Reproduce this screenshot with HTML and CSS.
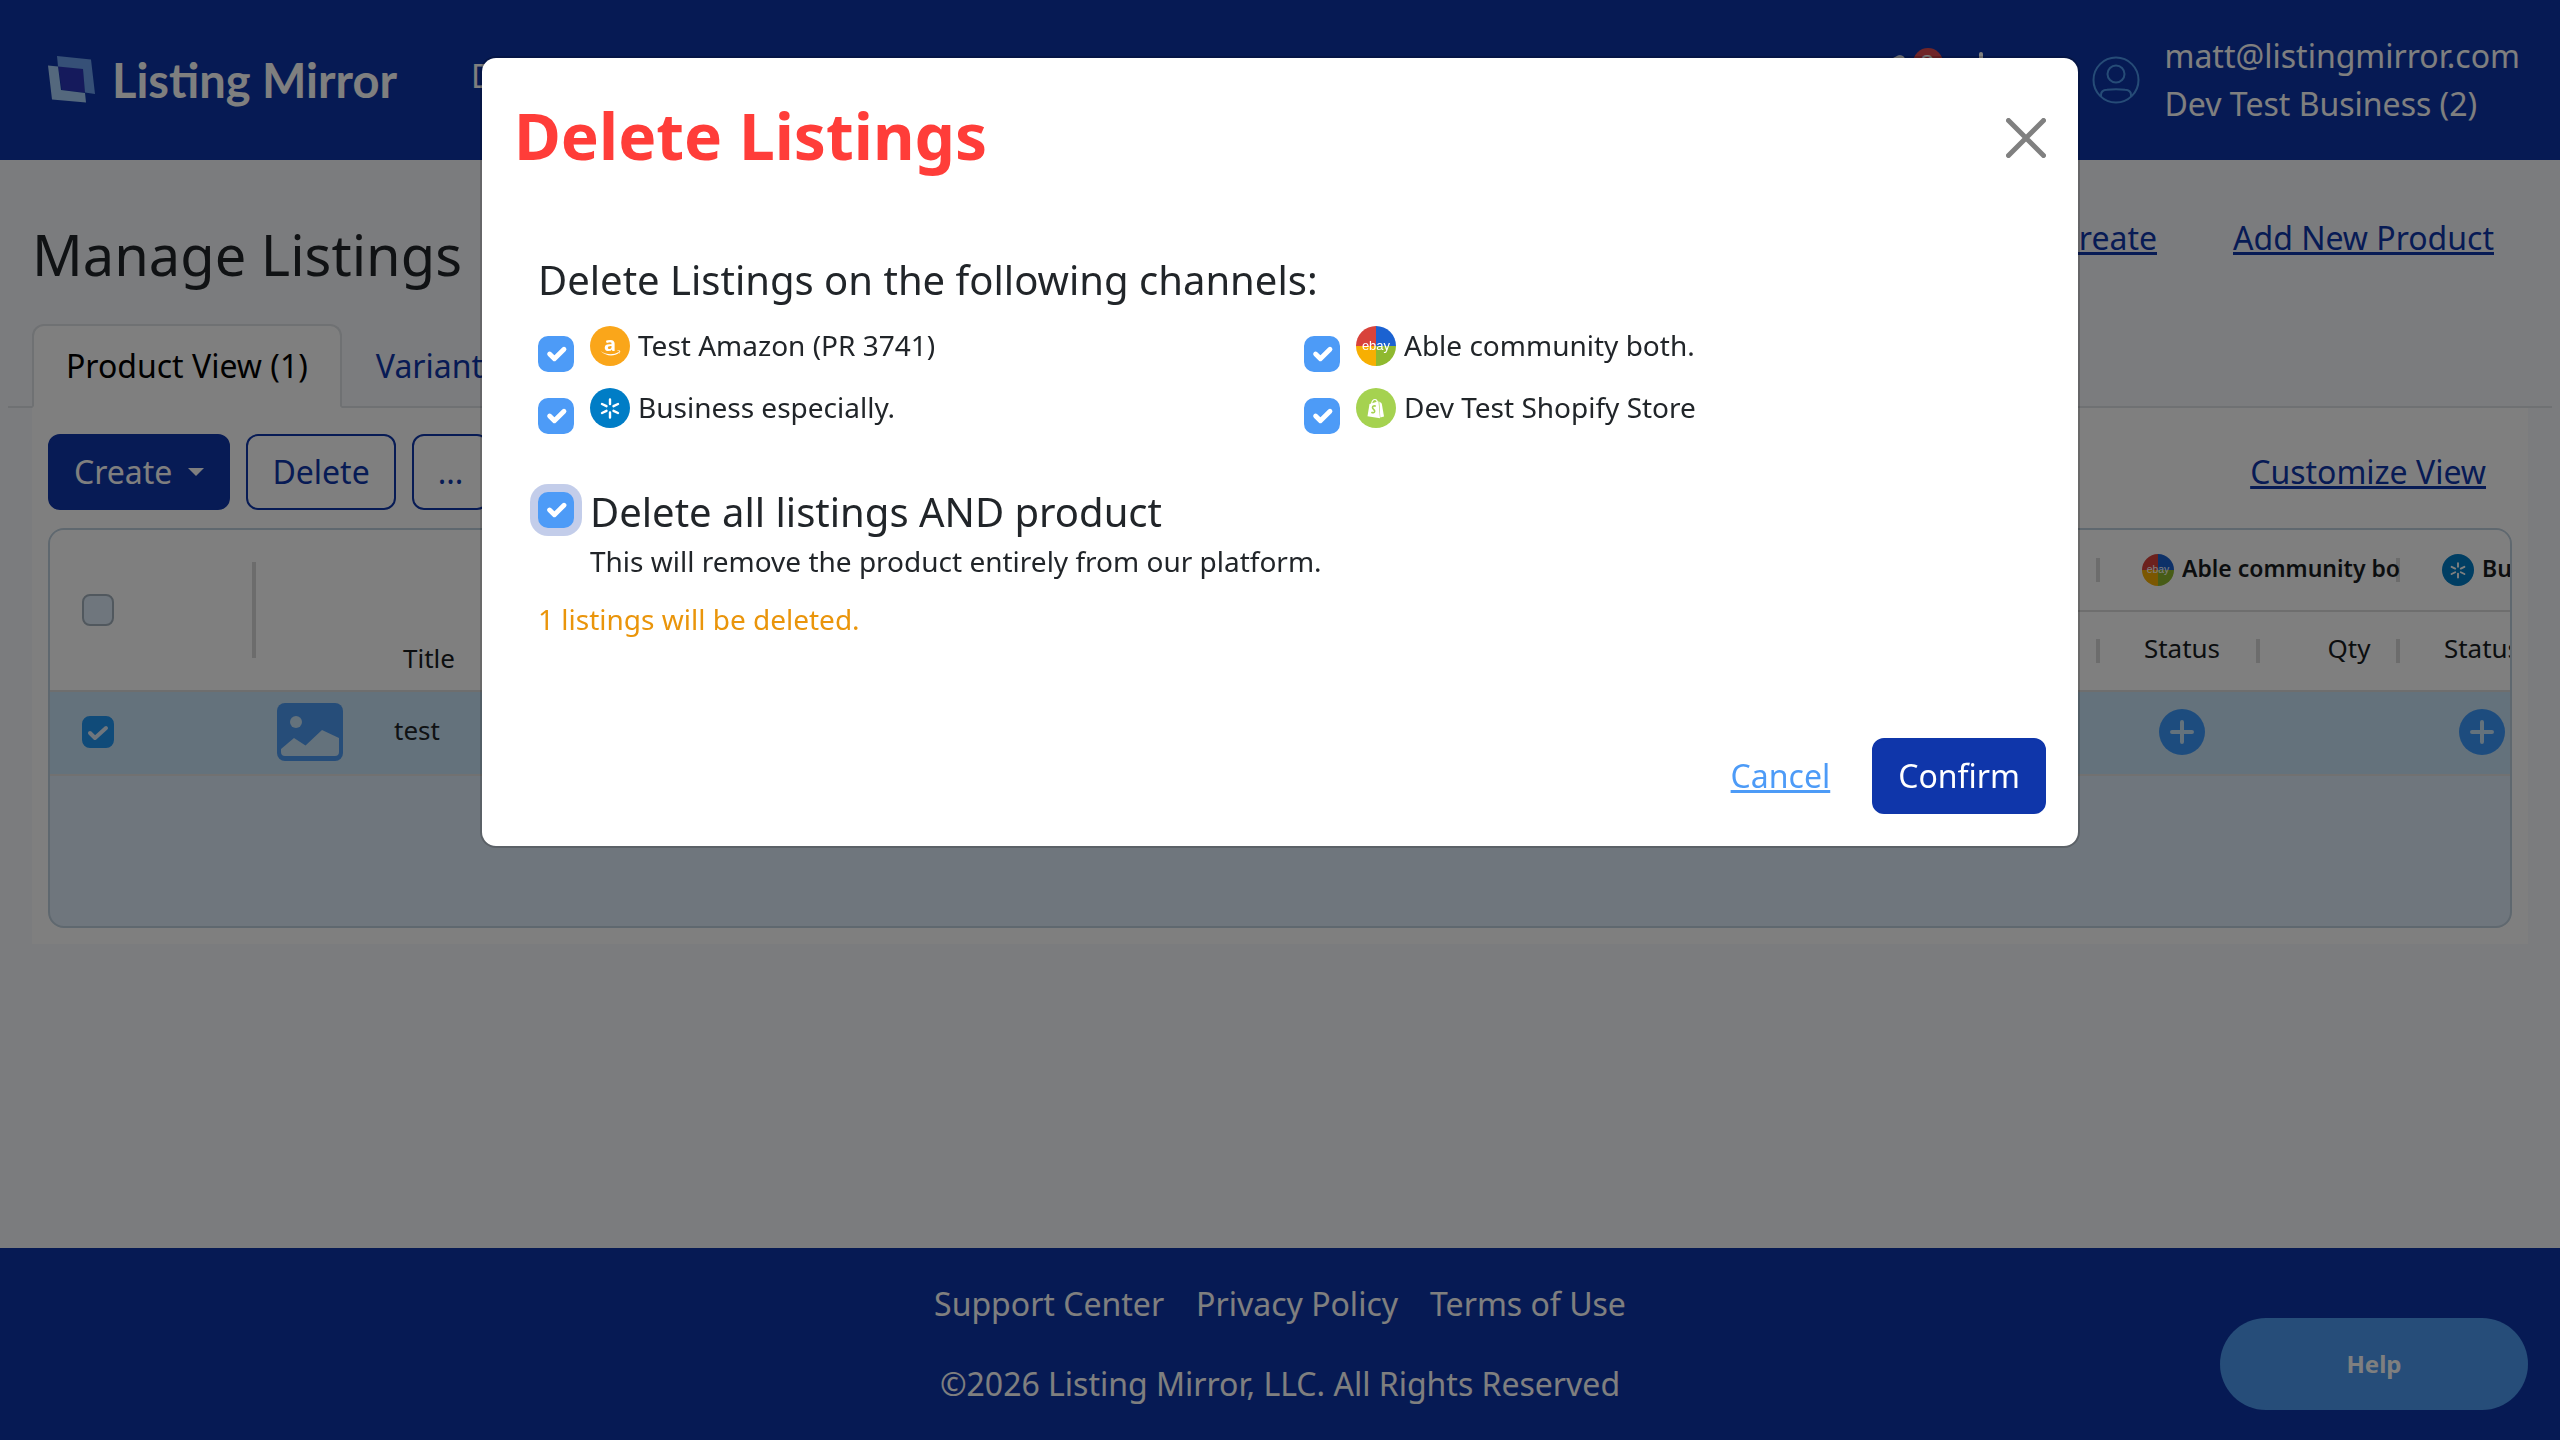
FILE: index.html
```html
<!DOCTYPE html>
<html lang="en">
<head>
<meta charset="utf-8">
<meta name="viewport" content="width=device-width, initial-scale=1">
<title>Manage Listings - Listing Mirror</title>
<link rel="stylesheet" href="styles.css">
</head>
<body>
<svg class="sprite" aria-hidden="true">
  <symbol id="amazon" viewBox="0 0 40 40">
    <circle cx="20" cy="20" r="20" fill="#faa61a"/>
    <text x="20" y="25" text-anchor="middle" class="mark-a">a</text>
    <path d="M10.500 25c6 4 13 4.200 18 1l.6.800c-5 3.900-13 3.700-18.600-1.800zM27 24.800c1.500-.4 3-.3 3.200.1.200.7-.4 2.200-1.300 3 .3-1 .7-2 .4-2.400-.4-.5-1.400-.5-2.300-.700z" fill="#fff"/>
  </symbol>
  <symbol id="walmart" viewBox="0 0 40 40">
    <circle cx="20" cy="20" r="20" fill="#007dc6"/>
    <g stroke="#fff" stroke-width="2.400" stroke-linecap="round">
      <path d="M20 11.500v4.500M20 24.500v5M12 16l4.500 2.200M28 16l-4.500 2.200M12 25l4.500-2.200M28 25l-4.500-2.200"/>
    </g>
  </symbol>
  <symbol id="ebay" viewBox="0 0 40 40">
    <path d="M20 20V0A20 20 0 0 0 0 20z" fill="#d8433b"/>
    <path d="M20 20h20A20 20 0 0 0 20 0z" fill="#1b62d1"/>
    <path d="M20 20H0a20 20 0 0 0 20 20z" fill="#f7af02"/>
    <path d="M20 20v20a20 20 0 0 0 20-20z" fill="#8fb92f"/>
    <text x="20" y="24" text-anchor="middle" class="mark-ebay">ebay</text>
  </symbol>
  <symbol id="shopify" viewBox="0 0 40 40">
    <circle cx="20" cy="20" r="20" fill="#a5d250"/>
    <path d="M13.500 16l9-2.800 1.500 17-12.500-2z" fill="#fff"/>
    <path d="M23.300 13.500l1 .7 1.500 1.500L28 28.500l-3.700 1z" fill="#fff"/>
    <path d="M15.500 16c.5-3 2-4.500 3.500-4.500s2.300 1 2.400 3.500" fill="none" stroke="#fff" stroke-width="1.200"/>
    <path d="M19.800 18.300c-1.500-.8-3.300-.3-3.300 1.300s2.300 1.900 2.200 3.700c-.1 1.600-2 2-3.300.800" fill="none" stroke="#a5d250" stroke-width="1.600"/>
  </symbol>
  <symbol id="plus" viewBox="0 0 46 46">
    <circle cx="23" cy="23" r="23" fill="#3a98fc"/>
    <path d="M23 13v20M13 23h20" stroke="#c8e4f8" stroke-width="4" stroke-linecap="round"/>
  </symbol>
</svg>

<header class="topbar">
  <a class="brand" href="#">
    <svg class="brand-mark" viewBox="0 0 48 48" aria-hidden="true">
      <path d="M10 10l25 2.500 2 24-23-2.500z" fill="#2b35b8"/>
      <path d="M9 0l34 3.500 4 34.500-10-1.500-2-23.500-25-2.500z" fill="#6ca0ee"/>
      <path d="M0 9.500l10 1 3 23.500 24 3 1 9.500-34-3z" fill="#a9d0fb"/>
    </svg>
    <span>Listing Mirror</span>
  </a>
  <nav class="topnav"><a href="#">Dashboard</a></nav>
  <div class="tools">
    <button class="tool" aria-label="Announcements">
      <svg viewBox="0 0 48 56" aria-hidden="true"><path d="M8 8l9-4.500q5-1 7 3l8 16L14 28z" fill="#fff"/></svg>
      <span class="count">2</span>
    </button>
    <button class="tool" aria-label="Settings">
      <svg viewBox="0 0 48 56" aria-hidden="true"><path d="M24 2v6" stroke="#fff" stroke-width="4" stroke-linecap="round"/><circle cx="24" cy="28" r="20" fill="none" stroke="#fff" stroke-width="4"/></svg>
    </button>
    <svg class="avatar" viewBox="0 0 48 48" aria-hidden="true">
      <g fill="none" stroke="#4d98ee" stroke-width="2">
        <circle cx="24" cy="24" r="22.500"/><circle cx="24" cy="18" r="8.500"/>
        <path d="M9 40.500v-1.500q0-5 6-5.200q9-1 18 0q6 .2 6 5.200v1.500"/>
      </g>
    </svg>
    <div class="account"><a href="#">matt@listingmirror.com</a><span>Dev Test Business (2)</span></div>
  </div>
</header>

<main class="page">
  <div class="page-head">
    <h1>Manage Listings</h1>
    <div class="page-links"><a href="#">Bulk Create</a><a href="#">Add New Product</a></div>
  </div>
  <nav class="tabs">
    <a class="tab active" href="#">Product View (1)</a>
    <a class="tab" href="#">Variant View (1)</a>
  </nav>
  <section class="panel">
    <div class="toolbar">
      <button class="btn solid">Create<span class="caret"></span></button>
      <button class="btn outline">Delete</button>
      <button class="btn outline">...</button>
      <a class="customize" href="#">Customize View</a>
    </div>
    <div class="grid">
      <table class="listing-table">
        <colgroup>
          <col class="c-check"><col class="c-image"><col>
          <col class="c-status"><col class="c-qty"><col class="c-status"><col class="c-qty"><col class="c-status"><col class="c-qty">
        </colgroup>
        <thead>
          <tr class="groups">
            <th rowspan="2" class="check-cell tall-split"><input type="checkbox" class="grid-check" aria-label="Select all"></th>
            <th rowspan="2"></th>
            <th rowspan="2" class="title-head">Title</th>
            <th colspan="2" class="split"><div class="channel-head"><svg><use href="#amazon"/></svg><span>Test Amazon</span></div></th>
            <th colspan="2" class="split"><div class="channel-head"><svg><use href="#ebay"/></svg><span>Able community both.</span></div></th>
            <th colspan="2"><div class="channel-head"><svg><use href="#walmart"/></svg><span>Business especially.</span></div></th>
          </tr>
          <tr class="fields">
            <th class="split">Status</th><th class="split qty">Qty</th>
            <th class="split">Status</th><th class="split qty">Qty</th>
            <th class="split">Status</th><th class="qty">Qty</th>
          </tr>
        </thead>
        <tbody>
          <tr>
            <td class="check-cell"><input type="checkbox" class="grid-check" checked aria-label="Select test"></td>
            <td class="image-cell">
              <svg class="thumb" viewBox="0 0 66 58" aria-label="No image">
                <rect width="66" height="58" rx="8" fill="#4c9af2"/>
                <circle cx="19" cy="19" r="6" fill="#c8e4f8"/>
                <path d="M4 46l13-11 11.500 7.500L45 27l17 8v14q0 4-4 4H8q-4 0-4-4z" fill="#c8e4f8"/>
              </svg>
            </td>
            <td class="name-cell">test</td>
            <td class="add-cell"><svg class="plus"><use href="#plus"/></svg></td><td></td>
            <td class="add-cell"><svg class="plus"><use href="#plus"/></svg></td><td></td>
            <td class="add-cell"><svg class="plus"><use href="#plus"/></svg></td><td></td>
          </tr>
        </tbody>
      </table>
    </div>
  </section>
</main>

<footer class="footer">
  <nav><a href="#">Support Center</a><a href="#">Privacy Policy</a><a href="#">Terms of Use</a></nav>
  <p>©2026 Listing Mirror, LLC. All Rights Reserved</p>
</footer>

<button class="help">Help</button>

<div class="backdrop">
  <div class="modal" role="dialog" aria-modal="true" aria-labelledby="modal-title">
    <div class="modal-head">
      <h2 id="modal-title">Delete Listings</h2>
      <button class="close" aria-label="Close">
        <svg viewBox="0 0 40 40" aria-hidden="true"><path d="M2.500 2.500l35 35M37.500 2.500l-35 35" stroke="#808080" stroke-width="5" stroke-linecap="round"/></svg>
      </button>
    </div>
    <div class="modal-body">
      <h3>Delete Listings on the following channels:</h3>
      <div class="channels">
        <label class="channel"><input type="checkbox" class="check" checked><svg><use href="#amazon"/></svg>Test Amazon (PR 3741)</label>
        <label class="channel"><input type="checkbox" class="check" checked><svg><use href="#ebay"/></svg>Able community both.</label>
        <label class="channel"><input type="checkbox" class="check" checked><svg><use href="#walmart"/></svg>Business especially.</label>
        <label class="channel"><input type="checkbox" class="check" checked><svg><use href="#shopify"/></svg>Dev Test Shopify Store</label>
      </div>
      <div class="all">
        <input type="checkbox" class="check focused" id="all" checked>
        <div>
          <label for="all">Delete all listings AND product</label>
          <p>This will remove the product entirely from our platform.</p>
        </div>
      </div>
      <p class="warning">1 listings will be deleted.</p>
    </div>
    <div class="modal-foot">
      <a href="#">Cancel</a>
      <button class="btn solid">Confirm</button>
    </div>
  </div>
</div>
</body>
</html>
```

FILE: styles.css
```css
:root {
  --navy: #0f36aa;
  --sky: #4d9bf7;
  --ink: #212529;
}

* { box-sizing: border-box; }

body {
  margin: 0;
  min-height: 100vh;
  display: flex;
  flex-direction: column;
  background: #f7f8fc;
  color: var(--ink);
  font: 32px/48px "Noto Sans", sans-serif;
}

h1, h2, h3, p { margin: 0; font-weight: 400; }
a { color: inherit; }
button { font: inherit; cursor: pointer; }
svg { display: block; flex: none; }
.sprite { display: none; }
.mark-a { font: 700 20px "Noto Sans", sans-serif; fill: #fff; }
.mark-ebay { font: 400 13px "Liberation Sans", sans-serif; fill: #fff; }

/* Top bar */
.topbar {
  display: flex;
  align-items: center;
  height: 160px;
  padding: 0 40px 0 48px;
  background: #0d35a8;
  color: #fff;
}
.topbar a { text-decoration: none; }
.brand {
  display: flex;
  align-items: center;
  gap: 16px;
  font: 700 47px/56px Lato, sans-serif;
}
.brand-mark { width: 48px; height: 48px; }
.topnav { margin: 0 0 8px 74px; }
.tools { display: flex; align-items: center; margin-left: auto; }
.tool {
  position: relative;
  width: 48px;
  height: 56px;
  margin-right: 28px;
  padding: 0;
  border: 0;
  background: none;
  color: #fff;
}
.tool svg { width: 48px; height: 56px; }
.count {
  position: absolute;
  top: -4px;
  right: -14px;
  width: 30px;
  height: 30px;
  border-radius: 50%;
  background: #e04a50;
  font-size: 24px;
  line-height: 30px;
}
.avatar { width: 48px; height: 48px; margin: 0 25px 0 59px; }
.account { display: flex; flex-direction: column; }

/* Page */
.page { flex: 1; padding-top: 54px; }
.page-head {
  display: flex;
  justify-content: space-between;
  align-items: flex-start;
  padding: 0 66px 0 32px;
  margin-bottom: 36px;
}
h1 { margin-top: 6px; font-size: 56px; line-height: 68px; }
.page-links { display: flex; gap: 76px; color: var(--navy); }

.tabs {
  display: flex;
  margin: 0 8px;
  padding-left: 24px;
  border-bottom: 2px solid #dee2e6;
}
.tab {
  margin-bottom: -2px;
  padding: 16px 32px;
  border: 2px solid transparent;
  border-radius: 12px 12px 0 0;
  color: var(--navy);
  text-decoration: none;
}
.tab.active {
  border-color: #dee2e6 #dee2e6 #fff;
  background: #fff;
  color: #000;
}
.panel { margin: 0 32px; padding: 26px 16px 16px; background: #fff; }
.toolbar { display: flex; align-items: center; gap: 16px; margin-bottom: 18px; }
.btn {
  display: flex;
  align-items: center;
  height: 76px;
  padding: 0 24px;
  border: 2px solid var(--navy);
  border-radius: 12px;
}
.btn.solid { background: var(--navy); color: #fff; }
.btn.outline { background: none; color: var(--navy); }
.caret {
  margin-left: 16px;
  border: 8px solid transparent;
  border-top-color: #fff;
  border-bottom: 0;
}
.customize { margin: 0 26px 0 auto; color: var(--navy); }

/* Listing grid */
.grid {
  height: 400px;
  overflow: hidden;
  border: 2px solid #bfd0de;
  border-radius: 16px;
  background: #deecfa;
  font-size: 26px;
  line-height: 36px;
}
.listing-table {
  width: calc(100% + 190px);
  table-layout: fixed;
  border-collapse: separate;
  border-spacing: 0;
}
.c-check { width: 206px; }
.c-image { width: 122px; }
.c-status { width: 160px; }
.c-qty { width: 140px; }
th, td { padding: 0; overflow: hidden; }
th { background: #fff; color: #181d1f; font-weight: 400; }
.groups th { height: 82px; border-bottom: 2px solid #dddddd; }
.fields th { height: 80px; padding: 0 0 6px 4px; border-bottom: 2px solid #dddddd; }
.fields .qty { padding-left: 38px; }
td { height: 84px; padding-bottom: 2px; background: #c8e4f8; border-bottom: 2px solid #e2e2e2; }
.split {
  background: linear-gradient(#d9d9d9, #d9d9d9) right center / 4px 24px no-repeat #fff;
}
.tall-split {
  background: linear-gradient(#d9d9d9, #d9d9d9) right center / 4px 96px no-repeat #fff;
}
.check-cell { padding-left: 32px; text-align: left; }
.groups .title-head { padding: 0 0 14px 25px; text-align: left; vertical-align: bottom; }
.channel-head {
  display: flex;
  align-items: center;
  gap: 8px;
  padding-left: 42px;
  font-size: 23px;
  font-weight: 600;
  white-space: nowrap;
}
.channel-head svg { width: 32px; height: 32px; }
.channel-head span { overflow: hidden; padding-bottom: 4px; }
.thumb { width: 66px; height: 58px; margin-left: 21px; }
.name-cell { padding: 0 0 6px 16px; }
.plus { width: 46px; height: 46px; margin-left: 59px; }

.grid-check, .check {
  appearance: none;
  display: block;
  flex: none;
  margin: 0;
  background: center / 100% no-repeat;
}
.grid-check {
  width: 32px;
  height: 32px;
  border: 2px solid #a3b1bd;
  border-radius: 8px;
  background-color: #deecfa;
}
.grid-check:checked {
  border-color: #2196f3;
  background-color: #2196f3;
  background-image: url("data:image/svg+xml,%3Csvg xmlns='http://www.w3.org/2000/svg' viewBox='0 0 28 28'%3E%3Cpath d='M6 15l5 5 11-10' fill='none' stroke='%23deecfa' stroke-width='4' stroke-linecap='round' stroke-linejoin='round'/%3E%3C/svg%3E");
}

/* Footer */
.footer { padding: 32px; background: #0d35a8; color: #fff; text-align: center; }
.footer nav { display: flex; justify-content: center; gap: 32px; margin-bottom: 32px; }
.footer a { text-decoration: none; }
.help {
  position: fixed;
  right: 32px;
  bottom: 30px;
  width: 308px;
  height: 92px;
  border: 0;
  border-radius: 46px;
  background: #4c9af2;
  color: #fff;
  font-size: 24px;
  font-weight: 700;
}

/* Modal */
.backdrop {
  position: fixed;
  inset: 0;
  padding-top: 56px;
  overflow: auto;
  background: rgba(0, 0, 0, 0.5);
}
.modal {
  max-width: 1600px;
  margin: 0 auto;
  border: 2px solid rgba(0, 0, 0, 0.175);
  border-radius: 16px;
  background: #fff;
  background-clip: padding-box;
}
.modal-head { display: flex; justify-content: space-between; padding: 32px; }
h2 { color: #ff3d39; font-size: 64px; font-weight: 700; line-height: 92px; }
.close { height: 96px; padding: 0; border: 0; background: none; }
.close svg { width: 40px; height: 40px; }
.modal-body { padding: 38px 56px 66px; font-size: 28px; line-height: 42px; }
h3 { margin-bottom: 20px; font-size: 40px; line-height: 48px; }
.channels {
  display: grid;
  grid-template-columns: 1fr 1fr;
  gap: 20px 48px;
  margin-bottom: 60px;
}
.channel { display: flex; height: 42px; }
.channel svg { width: 40px; height: 40px; margin: 2px 8px 0 0; }
.check {
  width: 36px;
  height: 36px;
  margin-right: 16px;
  border: 2px solid #b9c6d3;
  border-radius: 10px;
}
.channel .check { margin-top: 12px; }
.check:checked {
  border-color: var(--sky);
  background-color: var(--sky);
  background-image: url("data:image/svg+xml,%3Csvg xmlns='http://www.w3.org/2000/svg' viewBox='0 0 20 20'%3E%3Cpath fill='none' stroke='%23fff' stroke-linecap='round' stroke-linejoin='round' stroke-width='3' d='m6 10 3 3 6-6'/%3E%3C/svg%3E");
}
.all { display: flex; }
.all .check { margin-top: 4px; }
.all label { display: block; margin-bottom: 4px; font-size: 40px; line-height: 48px; }
.focused { box-shadow: 0 0 0 8px rgba(15, 54, 170, 0.25); }
.warning { margin-top: 16px; color: #ea950b; }
.modal-foot {
  display: flex;
  justify-content: flex-end;
  align-items: center;
  gap: 42px;
  padding: 32px;
}
.modal-foot a { color: var(--sky); }
```
